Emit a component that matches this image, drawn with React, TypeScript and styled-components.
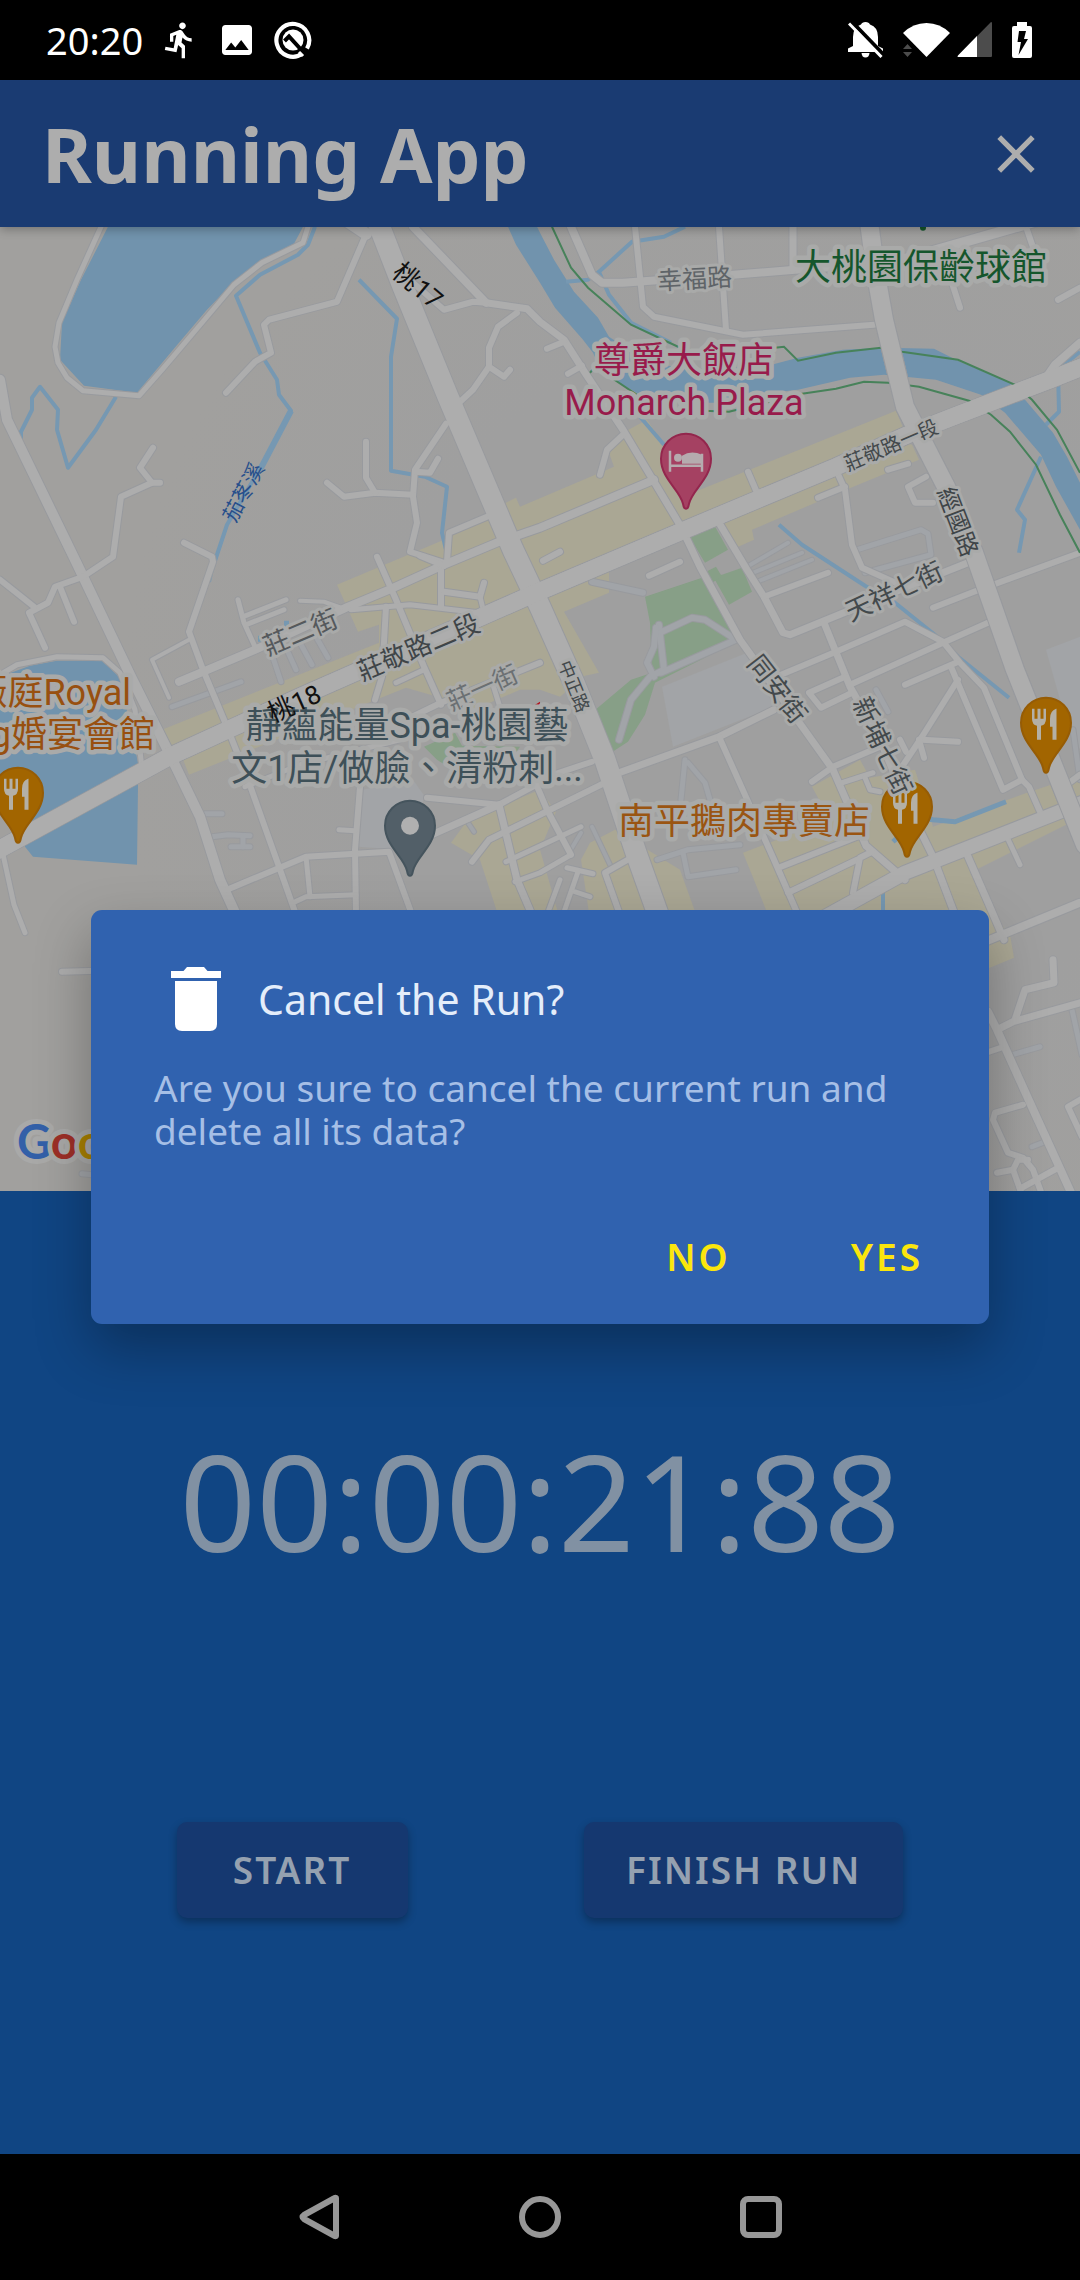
import React from "react";
import styled, { createGlobalStyle } from "styled-components";
import { MdClose, MdDirectionsRun, MdImage } from "react-icons/md";

const GlobalStyle = createGlobalStyle`
  * { box-sizing: border-box; }
  body { margin: 0; background: #000; }
  button { border: 0; background: none; padding: 0; margin: 0; font: inherit; color: inherit; cursor: pointer; }
`;

const Screen = styled.div`
  display: flex;
  flex-direction: column;
  min-height: 100vh;
  font-family: "Noto Sans", "Noto Sans CJK TC", sans-serif;
`;

const StatusBar = styled.header`
  display: flex;
  align-items: center;
  justify-content: space-between;
  height: 80px;
  padding: 0 48px 0 46px;
  background: #000;
  color: #fff;
`;

const StatusGroup = styled.div<{ $gap: number }>`
  display: flex;
  align-items: center;
  gap: ${(p) => p.$gap}px;
`;

const Clock = styled.time`
  font-size: 38px;
  line-height: 52px;
`;

const Body = styled.div`
  position: relative;
  display: flex;
  flex-direction: column;
  flex: 1;
`;

const AppBar = styled.header`
  position: relative;
  z-index: 1;
  display: flex;
  align-items: center;
  justify-content: space-between;
  height: 147px;
  padding: 0 32px 0 42px;
  background: #1a3b72;
  color: #adadad;
  box-shadow: 0 2px 10px rgba(0, 0, 0, 0.3);
`;

const AppTitle = styled.h1`
  margin: 0;
  font-size: 76px;
  line-height: 104px;
  font-weight: 700;
`;

const IconButton = styled.button`
  display: flex;
  align-items: center;
  justify-content: center;
`;

const MapPane = styled.section`
  position: relative;
  flex: 1 1 0;
  min-height: 480px;
  overflow: hidden;
  background: #a1a09e;
`;

const MapCanvas = styled.svg`
  position: absolute;
  inset: 0;
  width: 100%;
  height: 100%;
  font-family: Roboto, "Noto Sans CJK TC", sans-serif;
`;

const RunPane = styled.section`
  display: flex;
  flex-direction: column;
  flex: 1 1 0;
  min-height: 480px;
  background: #104583;
`;

const TimerArea = styled.div`
  display: flex;
  flex: 1;
  align-items: center;
  justify-content: center;
  padding-bottom: 12px;
`;

const Timer = styled.time`
  font-size: 134px;
  line-height: 184px;
  color: #8191a3;
`;

const RunActions = styled.div`
  display: flex;
  justify-content: space-evenly;
  margin-bottom: 236px;
`;

const RaisedButton = styled.button`
  height: 96px;
  min-width: 231px;
  padding: 0 42px;
  border-radius: 10px;
  background: #153870;
  color: #95a1b0;
  font-size: 37px;
  line-height: 52px;
  font-weight: 600;
  letter-spacing: 2px;
  box-shadow: 0 4px 8px rgba(0, 0, 0, 0.3);
`;

const DialogLayer = styled.div`
  position: absolute;
  inset: 0;
  z-index: 2;
  display: flex;
  align-items: center;
  justify-content: center;
  padding: 0 91px;
`;

const Dialog = styled.section`
  width: 100%;
  padding: 57px 24px 19px 63px;
  border-radius: 11px;
  background: #3062af;
  box-shadow: 0 24px 56px rgba(0, 0, 0, 0.3);
`;

const DialogHead = styled.div`
  display: flex;
  align-items: center;
  gap: 37px;
  height: 64px;
  padding-left: 17px;
`;

const DialogTitle = styled.h2`
  margin: 0;
  font-size: 41px;
  line-height: 56px;
  font-weight: 400;
  color: #e4edfa;
`;

const DialogText = styled.p`
  margin: 35px 39px 0 0;
  font-size: 37px;
  line-height: 43px;
  color: #a6bfe6;
`;

const DialogActions = styled.div`
  display: flex;
  justify-content: flex-end;
  gap: 36px;
  margin-top: 57px;
`;

const TextButton = styled.button`
  height: 96px;
  padding: 0 42px;
  color: #fbe60d;
  font-size: 37px;
  line-height: 52px;
  font-weight: 600;
  letter-spacing: 3px;
`;

const NavBar = styled.nav`
  display: flex;
  justify-content: center;
  height: 126px;
  background: #000;
`;

const NavButton = styled.button`
  display: flex;
  align-items: center;
  justify-content: center;
  width: 221px;
`;

/* Map data: polygons and polylines in map units */
type Line = [number, string];

const water = [
  "108,227 81,280 62,323 60,360 84,386 137,393 179,343 207,310 234,282 265,262 294,244 303,227",
  "508,227 516,245 540,283 555,308 583,340 593,353 602,373 640,395 685,403 719,403 753,395 798,390 850,378 884,375 936,380 981,395 1005,413 1041,455 1056,487 1080,530 1080,483 1067,457 1053,433 1025,400 1015,385 960,362 934,349 884,348 843,350 798,358 764,367 695,369 650,364 609,337 598,318 574,292 554,260 540,233 537,227",
  "0,677 30,666 57,661 102,661 120,678 138,763 138,785 137,865 33,857 25,847 20,800 0,790",
];

const shops = [
  "337,585 444,540 487,513 506,503 516,498 520,507 614,467 609,453 623,433 647,420 668,450 695,492 896,411 903,428 905,443 912,445 919,460 846,490 752,530 754,540 736,548 722,525 609,570 609,593 564,612 599,673 585,676 560,697 540,690 520,690 462,715 455,702 406,688 234,757 189,775 182,757 169,747 162,730 379,643 379,625 358,632",
  "812,787 860,760 870,778 915,770 933,827 1027,793 1057,783 1080,773 1080,818 970,873 990,910 1010,935 1014,958 985,970 980,920 770,920 743,853 830,820",
  "581,860 590,843 615,830 680,870 698,920 590,920",
  "451,843 468,820 540,790 556,812 540,850 560,920 497,912 480,860",
];

const parks = [
  "645,597 705,577 735,633 741,640 655,683 645,715 628,742 611,753 593,712 631,680 652,673 650,623",
  "722,575 742,568 752,592 729,605 712,575",
  "688,535 714,525 728,550 705,563",
  "706,572 716,567 722,577 712,583",
  "424,747 455,733 462,746 520,747 513,757 460,757 448,767 437,760",
];

const lots = [
  "662,687 747,653 774,707 673,747",
  "362,790 413,780 425,797 410,830 400,850 358,847",
  "1046,650 1080,637 1080,750 1060,700",
];

const streams: Line[] = [
  [4, "315,227 308,245 298,255 260,275 236,296 260,353 277,380 279,395 291,411 265,460 227,525 211,573 209,582"],
  [6, "291,411 260,470"],
  [4, "359,280 397,319 391,357 391,471 425,477 447,487 442,533 446,550"],
  [4, "116,397 96,430 68,468 57,430 58,410 40,387 32,398 32,410 21,432 21,443"],
  [2, "21,443 80,570"],
  [4, "685,227 664,237 632,242 599,272 609,295 631,323 671,343"],
  [4, "599,272 588,280 566,282"],
  [4, "1080,352 1058,370 1059,412 1046,425"],
  [4, "1041,457 1017,510 1025,520 1019,553"],
  [4, "779,525 802,545 865,586 895,603 941,640 958,657 1009,698"],
  [4, "640,417 664,445"],
  [5, "1006,802 955,822 933,820 919,818 893,842"],
  [4, "883,893 883,912"],
];

const trails = [
  "552,227 571,268 588,288 631,325 678,347 710,355 784,347 798,361 836,353 881,348 902,352 958,360 1015,385 1032,400 1057,430 1080,473",
  "590,373 595,367 640,397 678,410 729,412 802,394 836,389 864,382 888,383 919,387 969,401 991,415 1010,432 1036,465 1060,515 1080,553",
];

const lanes: Line[] = [
  [6, "592,582 643,593"],
  [6, "659,625 664,670 650,677 631,700 619,740"],
  [6, "662,632 692,618 705,620 736,640 661,673"],
  [6, "656,628 654,647 647,663 654,677"],
  [5, "685,760 681,800"],
  [5, "688,763 705,783 712,807"],
  [5, "657,860 688,850 740,845"],
  [5, "683,853 688,877 736,870"],
  [5, "857,550 921,530 928,534 931,555 865,573"],
  [4, "747,567 788,543"],
  [4, "753,573 802,553"],
  [4, "757,582 812,560"],
  [5, "172,707 241,682"],
  [5, "272,655 281,682"],
  [5, "286,648 296,670"],
  [5, "300,643 312,665"],
  [5, "316,637 328,658"],
  [5, "205,814 222,814"],
  [5, "212,837 228,835 250,836"],
  [5, "231,847 250,847"],
  [5, "243,836 243,847"],
  [5, "876,690 888,712"],
  [5, "1012,1055 1040,1047"],
  [5, "1072,1010 1082,1055"],
  [5, "1032,1147 1045,1142"],
  [4, "569,853 581,833"],
  [4, "592,827 610,865"],
  [4, "466,820 474,832"],
  [5, "82,1174 92,1175"],
  [5, "1080,780 1073,730"],
];

const roads: Line[] = [
  [5, "101,227 77,280 59,323 55,347 58,363 67,378 83,391 139,396 162,370 207,317 234,285 262,263 303,243 308,227"],
  [5, "0,675 17,665 57,657 103,658 120,673 135,710 142,768"],
  [10, "0,380 7,420 76,562 131,677 169,753 200,817 220,880 236,915 260,980"],
  [6, "365,237 337,302 269,320 264,325 271,353 255,362 226,393"],
  [8, "413,227 486,303"],
  [7, "486,303 527,309 540,322 564,340 585,373 623,430 681,527 700,567 740,640 833,770 866,846 905,880"],
  [6, "413,283 444,310 473,302 486,303"],
  [6, "517,313 498,327 489,348 489,367 473,390 458,404"],
  [6, "489,367 504,377 510,370"],
  [6, "446,424 415,470 413,497 417,523 410,552 444,563"],
  [6, "413,495 375,493 344,497 327,483"],
  [6, "375,493 366,478 366,442"],
  [6, "415,472 430,473 438,459"],
  [6, "487,517 449,533 447,562"],
  [6, "153,448 140,468 152,483 121,497 113,557 83,577 55,587 48,603 29,613 45,648"],
  [6, "152,483 160,483"],
  [6, "0,580 34,607"],
  [6, "60,587 74,622"],
  [6, "184,543 212,557 213,562 189,632 203,670 224,720 248,780 279,867 296,915"],
  [4, "189,640 152,660 169,698"],
  [8, "179,682 203,672 255,650 348,607 389,590 444,565 499,542 540,528 654,480"],
  [6, "377,557 396,600 424,667 441,705"],
  [5, "351,610 410,605 479,613"],
  [6, "386,607 382,677 375,700"],
  [6, "441,570 441,607"],
  [6, "420,556 444,566"],
  [6, "444,592 480,597 484,583"],
  [5, "480,597 484,613"],
  [6, "540,663 441,703 375,735"],
  [5, "396,683 424,670"],
  [5, "493,685 506,727"],
  [5, "245,787 300,765 400,740"],
  [5, "238,600 244,623 255,647"],
  [5, "243,617 286,600"],
  [5, "246,625 284,610"],
  [4, "300,601 324,602 341,608"],
  [6, "227,890 282,867 306,857 389,852 412,915"],
  [6, "360,787 355,850 356,915"],
  [5, "306,857 310,897"],
  [5, "293,903 306,897 356,895"],
  [5, "339,830 355,831"],
  [6, "427,798 499,805 540,783 547,777 592,762"],
  [7, "425,838 499,805 517,880 532,915"],
  [6, "472,862 489,840 540,815 605,783"],
  [5, "506,862 547,843 581,827"],
  [5, "515,882 540,873 571,855"],
  [6, "530,770 547,810 571,855"],
  [5, "567,868 593,874"],
  [5, "578,872 563,915"],
  [5, "560,880 547,915"],
  [5, "575,892 590,897"],
  [6, "640,853 605,873 620,915"],
  [7, "619,773 719,737 774,710"],
  [6, "719,737 774,860 798,915"],
  [6, "781,867 857,837"],
  [6, "788,893 857,860"],
  [6, "872,852 860,858 853,893"],
  [7, "719,523 747,570 764,597 783,633 790,635 905,588 968,563"],
  [6, "764,597 828,573"],
  [6, "649,576 680,562"],
  [7, "824,623 850,687 880,740 905,800 933,857 955,915"],
  [6, "781,675 836,652 905,622 943,642 960,663 984,688 1022,780 1029,787 1040,812"],
  [6, "1022,780 1003,790 951,667"],
  [6, "850,685 943,643 988,623"],
  [6, "905,685 956,663"],
  [6, "845,677 809,693 821,708 852,693"],
  [6, "958,680 922,737 902,767"],
  [6, "922,740 958,742"],
  [6, "919,740 924,758"],
  [6, "900,740 906,752"],
  [6, "933,608 974,592 1080,553"],
  [6, "812,782 833,767 880,747"],
  [5, "842,783 873,773"],
  [5, "865,778 870,790 880,792"],
  [7, "965,850 989,905 1004,940"],
  [5, "1005,833 1020,865"],
  [8, "571,227 592,275 602,283 623,283 733,275 795,270 866,265"],
  [6, "635,227 643,307 654,317 743,335 874,325"],
  [6, "719,227 726,330"],
  [7, "793,227 793,270"],
  [10, "885,265 1035,222"],
  [6, "1027,230 1038,262"],
  [6, "951,280 960,308"],
  [6, "1058,300 1080,288"],
  [8, "1046,378 1055,365 1080,343"],
  [6, "547,349 564,342"],
  [6, "568,374 582,366"],
  [6, "600,475 607,450 623,435"],
  [6, "748,472 757,493"],
  [6, "836,470 845,490 852,545 862,568 900,585"],
  [6, "818,498 845,487"],
  [6, "926,477 908,487 915,503 933,503"],
  [6, "888,470 908,464"],
  [6, "543,561 560,552"],
  [8, "985,942 1080,903"],
  [7, "1053,960 1054,983 1025,990 1015,1020"],
  [7, "997,1030 1013,1022 1080,1003"],
  [8, "988,1012 997,1030 1030,1103 1072,1195"],
  [6, "989,1052 1001,1048"],
  [6, "1023,1105 995,1113 993,1120 1008,1153 1023,1158 1033,1170 1042,1195"],
  [6, "997,1173 1013,1170 1022,1195"],
  [6, "1013,1170 1018,1160 1028,1160"],
  [6, "1020,1189 1060,1167"],
  [6, "1080,1100 1068,1107 1082,1137"],
  [5, "2,850 14,905 25,933"],
  [6, "62,972 98,971"],
  [6, "1060,790 1080,775"],
];

const avenues: Line[] = [
  [12, "348,222 366,234"],
  [21, "375,215 403,287 448,397 513,550 540,607 574,683 605,760 636,853 660,920"],
  [17, "-5,852 169,757 300,697 527,597 678,533 836,467 912,433 953,417 1050,380 1085,366"],
  [18, "869,222 876,275 884,320 905,407 946,487 974,553 1015,670 1085,845"],
  [14, "820,920 905,873 1085,802"],
];

type Label = { t: string; x: number; y: number; s: number; c: string; r?: number; a?: "start" | "middle" | "end" };

const labels: Label[] = [
  { t: "幸福路", x: 695, y: 288, s: 25, c: "#5f6468", r: -3 },
  { t: "莊敬路一段", x: 894, y: 452, s: 20, c: "#43494c", r: -23 },
  { t: "經國路", x: 950, y: 525, s: 24, c: "#3f4548", r: 69 },
  { t: "中正路", x: 568, y: 689, s: 18, c: "#43494c", r: 68 },
  { t: "莊二街", x: 304, y: 641, s: 26, c: "#55595c", r: -23 },
  { t: "莊敬路二段", x: 422, y: 656, s: 26, c: "#3f4548", r: -23 },
  { t: "莊一街", x: 486, y: 696, s: 25, c: "#6b7073", r: -24 },
  { t: "同安街", x: 770, y: 695, s: 26, c: "#43494c", r: 52 },
  { t: "天祥七街", x: 898, y: 600, s: 26, c: "#43494c", r: -25 },
  { t: "大桃園保齡球館", x: 921, y: 280, s: 36, c: "#15562c" },
  { t: "尊爵大飯店", x: 684, y: 373, s: 36, c: "#981b4b" },
  { t: "Monarch Plaza", x: 684, y: 415, s: 36, c: "#981b4b" },
  { t: "薇庭Royal", x: 131, y: 705, s: 36, c: "#985010", a: "end" },
  { t: "g婚宴會館", x: 155, y: 747, s: 36, c: "#985010", a: "end" },
  { t: "靜蘊能量Spa-桃園藝", x: 407, y: 738, s: 36, c: "#3e5058" },
  { t: "文1店/做臉、清粉刺...", x: 407, y: 781, s: 36, c: "#3e5058" },
  { t: "南平鵝肉專賣店", x: 744, y: 834, s: 36, c: "#9a5512" },
];

const Casing = "#989a9e";

function Roads({ items, fill }: { items: Line[]; fill: string }) {
  return (
    <g fill="none" strokeLinecap="round" strokeLinejoin="round">
      {items.map(([w, p]) => (
        <polyline key={"c" + p} points={p} stroke={Casing} strokeWidth={w + 2} />
      ))}
      {items.map(([w, p]) => (
        <polyline key={p} points={p} stroke={fill} strokeWidth={w} />
      ))}
    </g>
  );
}

function MapLabel({ t, x, y, s, c, r = 0, a = "middle" }: Label) {
  return (
    <text
      x={x}
      y={y}
      fontSize={s}
      fill={c}
      textAnchor={a}
      transform={r ? `rotate(${r} ${x} ${y})` : undefined}
      stroke="#a9aaa9"
      strokeWidth={s > 30 ? 9 : 6}
      strokeLinejoin="round"
      paintOrder="stroke"
    >
      {t}
    </text>
  );
}

function Pin({ x, y, fill, edge, children }: { x: number; y: number; fill: string; edge: string; children: React.ReactNode }) {
  return (
    <g transform={`translate(${x} ${y})`}>
      <path
        d="M0 50C-2 50-2.500 48-3 45C-6 31-25 20-25 0A25 25 0 0 1 25 0C25 20 6 31 3 45C2.500 48 2 50 0 50Z"
        fill={fill}
        stroke={edge}
        strokeWidth="2"
      />
      {children}
    </g>
  );
}

function FoodPin({ x, y }: { x: number; y: number }) {
  return (
    <Pin x={x} y={y} fill="#a26500" edge="#965c05">
      <path
        d="M-14-14V-4Q-14 2-9 3V17H-5V3Q0 2 0-4V-14H-2.500V-4H-5.500V-14H-8.500V-4H-11.500V-14ZM10-14Q4-12 4-4V4H6.500V17H10.500V-14Z"
        fill="#b4b0a6"
      />
    </Pin>
  );
}

function CityMap() {
  return (
    <MapCanvas viewBox="0 227 1080 964" preserveAspectRatio="xMidYMid slice" role="img" aria-label="Map">
      <defs>
        <radialGradient id="ground" gradientUnits="userSpaceOnUse" cx="760" cy="720" r="640">
          <stop offset="0.6" stopColor="#9f9f9f" />
          <stop offset="1" stopColor="#a1a09e" />
        </radialGradient>
      </defs>
      <rect x="-500" y="0" width="2080" height="1700" fill="url(#ground)" />
      {shops.map((p) => <polygon key={p} points={p} fill="#aaa794" />)}
      {lots.map((p) => <polygon key={p} points={p} fill="#a2a4a7" />)}
      {parks.map((p) => <polygon key={p} points={p} fill="#879f87" />)}
      {water.map((p) => <polygon key={p} points={p} fill="#7193ad" />)}
      <g fill="none" stroke="#7698b2" strokeLinejoin="round">
        {streams.map(([w, p]) => <polyline key={p} points={p} strokeWidth={w} />)}
      </g>
      <path d="M258 636h5v6h-5zM284 621h5v6h-5z" fill="#7698b2" />
      <Roads items={lanes} fill="#a1a4a8" />
      <Roads items={[...roads, ...avenues]} fill="#adadad" />
      <g fill="none" stroke="#47825a" strokeWidth="2">
        {trails.map((p) => <polyline key={p} points={p} />)}
      </g>
      <Roads items={[avenues[3]]} fill="#adadad" />
      <polyline points={avenues[2][1]} fill="none" stroke="#adadad" strokeWidth={avenues[2][0]} />
      <circle cx="923" cy="228" r="3" fill="#15562c" />
      <path d="M532 707L540 702V709Z" fill="#b01215" />

      <text x="250" y="496" fontSize="21" fill="#274f8b" textAnchor="middle" transform="rotate(-62 250 496)">茄苳溪</text>
      {labels.map((l) => <MapLabel key={l.t} {...l} />)}
      <text x="412" y="293" fontSize="26" fill="#111" textAnchor="middle" transform="rotate(40 412 293)">桃17</text>
      <text x="298" y="712" fontSize="26" fill="#111" textAnchor="middle" transform="rotate(-24 298 712)">桃18</text>

      <Pin x={686} y={459} fill="#a54162" edge="#93264d">
        <path d="M-16-8V13M-16 7H16M16 13V-5" stroke="#b5abae" strokeWidth="2.500" fill="none" />
        <circle cx="-8" cy="-1" r="4" fill="#b5abae" />
        <path d="M-4 5V-3Q5-9 16-4V5Z" fill="#b5abae" />
      </Pin>
      <Pin x={410} y={826} fill="#525f68" edge="#45545d">
        <circle r="9" fill="#b0b0b0" />
      </Pin>
      <FoodPin x={18} y={793} />
      <FoodPin x={1046} y={723} />
      <FoodPin x={907} y={807} />
      <MapLabel t="新埔七街" x={874} y={750} s={26} c="#43494c" r={65} />

      <text
        x="17" y="1159" fontSize="47" fontFamily="Lato, sans-serif"
        stroke="#a9a9a8" strokeWidth="10" strokeLinejoin="round" paintOrder="stroke"
      >
        <tspan fill="#3360a8" fontWeight="700">G</tspan>
        <tspan fill="#9d2f27" fontWeight="700">o</tspan>
        <tspan fill="#a98000" fontWeight="700">o</tspan>
      </text>
    </MapCanvas>
  );
}

function BetaIcon() {
  return (
    <svg width="38" height="38" viewBox="0 0 38 38" aria-hidden="true">
      <path d="M28.500 32.500A16.400 16.400 0 1 1 33 27.500" fill="none" stroke="#fff" strokeWidth="4.200" />
      <circle cx="19" cy="19" r="10.500" fill="#fff" />
      <path d="M10.500 20L15 15.500L31.500 33.500" fill="none" stroke="#000" strokeWidth="4" />
      <path d="M25 31L29 35" stroke="#fff" strokeWidth="3" />
    </svg>
  );
}

function BellOffIcon() {
  return (
    <svg width="36" height="36" viewBox="0 0 36 36" aria-hidden="true">
      <path d="M5 24V15Q5 5 13 2.500Q14 0 17.500 0T22 2.500Q30 5 30 15V24L35 26.500V30H0V26.500Z" fill="#fff" />
      <path d="M13.500 31H21.500Q21 35.500 17.500 35.500T13.500 31Z" fill="#fff" />
      <path d="M4 0L36 33" stroke="#000" strokeWidth="4" />
      <path d="M1 1.500L33.500 35" stroke="#fff" strokeWidth="3" />
    </svg>
  );
}

function WifiIcon() {
  return (
    <svg width="48" height="36" viewBox="0 0 48 36" aria-hidden="true">
      <path d="M0 11Q10 1 23.500 1T47 11L23.500 35Z" fill="#fff" />
      <path d="M0 27L4.500 22L9 27ZM0 30H9L4.500 35Z" fill="#4c4c4c" />
    </svg>
  );
}

function SignalIcon() {
  return (
    <svg width="36" height="36" viewBox="0 0 36 36" aria-hidden="true">
      <path d="M34 0Q35 0 35 1V34Q35 35 34 35H1Q0 34.500 1 33.500Z" fill="#4c4c4c" />
      <path d="M20 14V35H1Q0 34.500 1 33.500Z" fill="#fff" />
    </svg>
  );
}

function BatteryIcon() {
  return (
    <svg width="20" height="36" viewBox="0 0 20 36" aria-hidden="true">
      <path d="M5 0H15V4H18Q20 4 20 6V34Q20 36 18 36H2Q0 36 0 34V6Q0 4 2 4H5Z" fill="#fff" />
      <path d="M7 9H14L12 17H16L6.500 33L9 20H5.500Z" fill="#000" />
    </svg>
  );
}

function TrashIcon() {
  return (
    <svg width="50" height="64" viewBox="0 0 50 64" aria-hidden="true">
      <path d="M0 4H12.500L16 0H33L36.500 4H50V11H0Z" fill="#fff" />
      <path d="M4 14H46V57Q46 64 39 64H11Q4 64 4 57Z" fill="#fff" />
    </svg>
  );
}

export default function App() {
  return (
    <>
      <GlobalStyle />
      <Screen>
        <StatusBar>
          <StatusGroup $gap={17}>
            <Clock>20:20</Clock>
            <MdDirectionsRun size={40} />
            <MdImage size={40} />
            <BetaIcon />
          </StatusGroup>
          <StatusGroup $gap={19}>
            <BellOffIcon />
            <StatusGroup $gap={6}>
              <WifiIcon />
              <SignalIcon />
            </StatusGroup>
            <BatteryIcon />
          </StatusGroup>
        </StatusBar>

        <Body>
          <AppBar>
            <AppTitle>Running App</AppTitle>
            <IconButton type="button" aria-label="Cancel run">
              <MdClose size={64} />
            </IconButton>
          </AppBar>
          <MapPane>
            <CityMap />
          </MapPane>
          <RunPane>
            <TimerArea>
              <Timer>00:00:21:88</Timer>
            </TimerArea>
            <RunActions>
              <RaisedButton type="button">START</RaisedButton>
              <RaisedButton type="button">FINISH RUN</RaisedButton>
            </RunActions>
          </RunPane>

          <DialogLayer>
            <Dialog role="dialog" aria-modal="true" aria-labelledby="dialog-title" aria-describedby="dialog-text">
              <DialogHead>
                <TrashIcon />
                <DialogTitle id="dialog-title">Cancel the Run?</DialogTitle>
              </DialogHead>
              <DialogText id="dialog-text">
                Are you sure to cancel the current run and delete all its data?
              </DialogText>
              <DialogActions>
                <TextButton type="button">NO</TextButton>
                <TextButton type="button">YES</TextButton>
              </DialogActions>
            </Dialog>
          </DialogLayer>
        </Body>

        <NavBar>
          <NavButton type="button" aria-label="Back">
            <svg width="42" height="46" viewBox="0 0 42 46">
              <path d="M38 4V42Q37 42.500 35 41L6 25Q3 23 6 21L35 5Q37 3.500 38 4Z" fill="none" stroke="#979797" strokeWidth="6" strokeLinejoin="round" />
            </svg>
          </NavButton>
          <NavButton type="button" aria-label="Home">
            <svg width="42" height="42" viewBox="0 0 42 42">
              <circle cx="21" cy="21" r="18" fill="none" stroke="#979797" strokeWidth="6" />
            </svg>
          </NavButton>
          <NavButton type="button" aria-label="Recent apps">
            <svg width="42" height="42" viewBox="0 0 42 42">
              <rect x="3" y="3" width="36" height="36" rx="5" fill="none" stroke="#979797" strokeWidth="6" />
            </svg>
          </NavButton>
        </NavBar>
      </Screen>
    </>
  );
}
